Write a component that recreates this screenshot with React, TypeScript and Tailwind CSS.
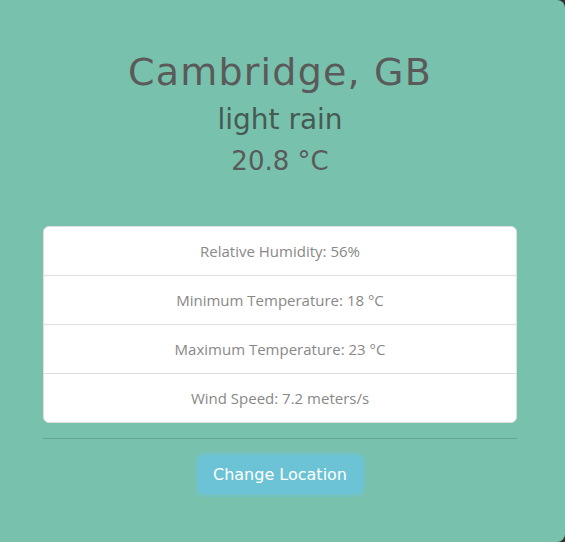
const stats = [
  'Relative Humidity: 56%',
  'Minimum Temperature: 18 °C',
  'Maximum Temperature: 23 °C',
  'Wind Speed: 7.2 meters/s',
]

export default function App() {
  return (
    <div className="w-[565px] h-[542px] bg-[#333333] overflow-hidden">
      <div className="h-full bg-[#78c2ad] rounded-r-[8px] pl-[43px] pr-[48px] pt-[48px] text-center">
        {/* Heading */}
        <h1 className="font-['DejaVu_Sans',sans-serif] font-normal text-[38px] leading-[48px] text-[#5a5a5a] tracking-[1.2px]">
          Cambridge, GB
        </h1>
        <h3 className="font-['DejaVu_Sans',sans-serif] text-[28px] leading-[36px] text-[#465a54] mt-[6px]">
          light rain
        </h3>
        <p className="font-['DejaVu_Sans',sans-serif] text-[26px] leading-[36px] text-[#5a5a5a] mt-[5px]">
          20.8 °C
        </p>

        {/* Stats list */}
        <ul className="mt-[47px] bg-white rounded-[6px] border border-[#dfdfdf] font-['Open_Sans',sans-serif] text-[15px] text-[#888888]">
          {stats.map((s, i) => (
            <li
              key={s}
              className={
                i < stats.length - 1
                  ? 'py-[12px] leading-[24px] border-b border-[#dfdfdf]'
                  : 'py-[12px] leading-[24px]'
              }
            >
              {s}
            </li>
          ))}
        </ul>

        <hr className="mt-[15px] border-t border-[#66a795]" />

        <button className="mt-[16px] w-[165px] h-[39px] rounded-[6px] bg-[#6cc3d5] text-white font-['DejaVu_Sans',sans-serif] text-[16px] shadow-[0_0_0_3px_rgba(108,195,213,0.45)]">
          Change Location
        </button>
      </div>
    </div>
  )
}
